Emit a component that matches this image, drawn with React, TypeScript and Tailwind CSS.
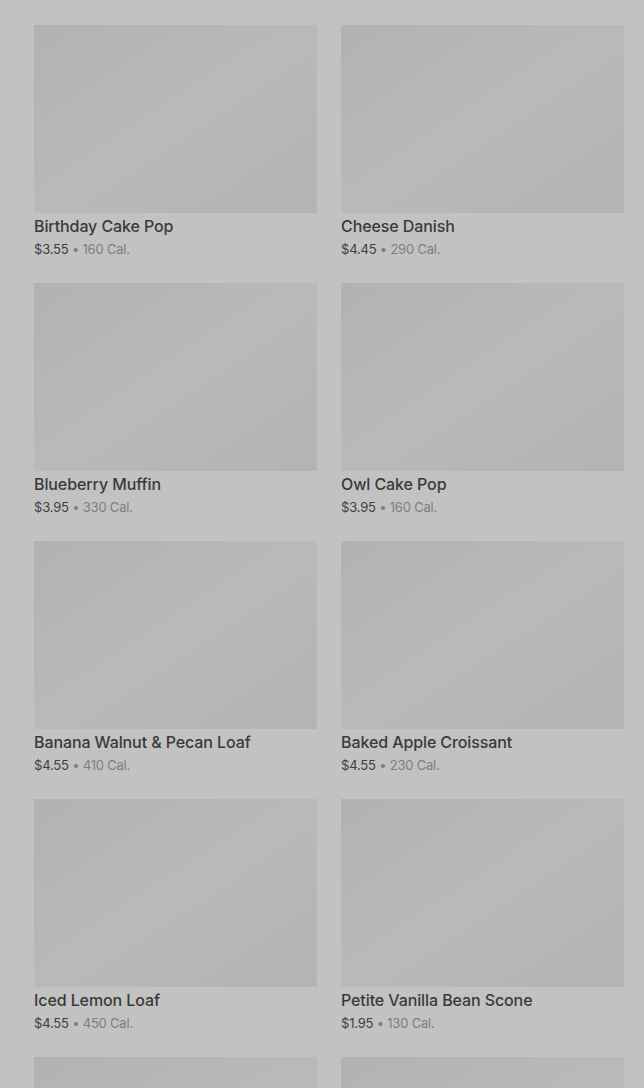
const items = [
  { name: "Birthday Cake Pop", price: "$3.55", cal: "160 Cal." },
  { name: "Cheese Danish", price: "$4.45", cal: "290 Cal." },
  { name: "Blueberry Muffin", price: "$3.95", cal: "330 Cal." },
  { name: "Owl Cake Pop", price: "$3.95", cal: "160 Cal." },
  { name: "Banana Walnut & Pecan Loaf", price: "$4.55", cal: "410 Cal." },
  { name: "Baked Apple Croissant", price: "$4.55", cal: "230 Cal." },
  { name: "Iced Lemon Loaf", price: "$4.55", cal: "450 Cal." },
  { name: "Petite Vanilla Bean Scone", price: "$1.95", cal: "130 Cal." },
];

function Thumb() {
  return <div className="h-[188px] bg-gradient-to-br from-[#b2b2b2] via-[#b9b9b9] to-[#b3b3b3]" />;
}

export default function App() {
  return (
    <div
      className="h-[1088px] overflow-hidden bg-[#c2c2c2] pt-[25px] pl-[34px] pr-[20px]"
      style={{ fontFamily: "Inter, 'Noto Sans', sans-serif" }}
    >
      <div className="grid grid-cols-2 gap-x-[24px] gap-y-[24px]">
        {items.map((item) => (
          <div key={item.name} className="flex flex-col">
            <Thumb />
            <h3 className="mt-[3px] text-[16px] leading-[20px] font-medium text-[#3a3a3a] tracking-[-0.1px]">
              {item.name}
            </h3>
            <p className="mt-[3px] text-[13px] leading-[20px] text-[#3f3f3f] tracking-[-0.2px]">
              {item.price}
              <span className="text-[#7e7e7e]"> • {item.cal}</span>
            </p>
          </div>
        ))}
        {/* next row, only the pictures show above the fold */}
        <Thumb />
        <Thumb />
      </div>
    </div>
  );
}
